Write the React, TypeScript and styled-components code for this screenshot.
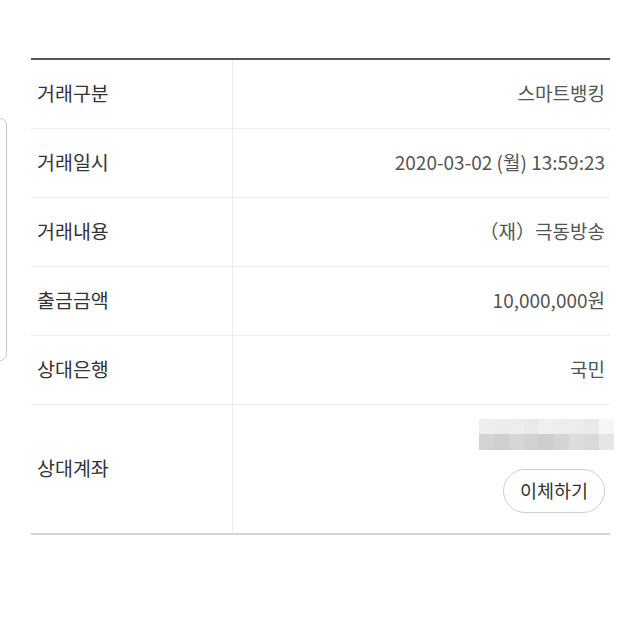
import styled, { createGlobalStyle } from 'styled-components';

const GlobalStyle = createGlobalStyle`
body{
    margin: 0;
    background: #fff;
    font-family: "Noto Sans CJK KR", "Noto Sans", sans-serif;
}
`;

const Page = styled.div`
padding: 58px 30px 0 31px;
`;

const DrawerEdge = styled.div`
position: fixed;
left: -20px;
top: 118px;
width: 25px;
height: 241px;
border: 1px solid #c8c8c8;
border-radius: 7px;
`;

const Table = styled.div`
width: 579px;
border-top: 2px solid #555;
border-bottom: 2px solid #d4d4d4;
`;

const Row = styled.div<{ tall?: boolean; last?: boolean }>`
display: grid;
grid-template-columns: 202px 1fr;
height: ${p => (p.tall ? 128 : 68)}px;
border-bottom: ${p => (p.last ? 'none' : '1px solid #ececec')};
`;

const Label = styled.div`
display: flex;
align-items: center;
padding: 0 0 3px 6px;
border-right: 1px solid #ececec;
font-size: 19.5px;
color: #333;
`;

const Value = styled.div`
display: flex;
align-items: center;
justify-content: flex-end;
padding: 0 5px 3px 0;
font-size: 19px;
color: #555;
`;

const AccountCell = styled.div`
display: flex;
flex-direction: column;
align-items: flex-end;
padding: 14px 5px 0 0;
`;

const Mosaic = styled.div`
display: grid;
grid-template-columns: repeat(9, 15px);
grid-template-rows: 15px 16px;
margin-right: -9px;
`;

const Pixel = styled.div<{ shade: string }>`
background: ${p => p.shade};
`;

const TransferButton = styled.button`
margin-top: 19px;
height: 44px;
padding: 0 16px 2px;
border: 1px solid #cfcfcf;
border-radius: 22px;
background: #fff;
font-family: inherit;
font-size: 18.5px;
color: #333;
`;

const topShades = ['#eeeeee', '#ececec', '#ededed', '#eaeaea', '#efefef', '#ededed', '#ececec', '#eaeaea', '#f6f6f6'];
const bottomShades = ['#d3d3d3', '#cfcfcf', '#d6d6d6', '#d1d1d1', '#cecece', '#d4d4d4', '#dcdcdc', '#d9d9d9', '#e6e6e6'];

const rows = [
    { label: '거래구분', value: '스마트뱅킹' },
    { label: '거래일시', value: '2020-03-02 (월) 13:59:23' },
    { label: '거래내용', value: '（재）극동방송' },
    { label: '출금금액', value: '10,000,000원' },
    { label: '상대은행', value: '국민' },
];

export default function App() {
    return (
        <Page>
            <GlobalStyle />
            <DrawerEdge />
            <Table>
                {rows.map(r => (
                    <Row key={r.label}>
                        <Label>{r.label}</Label>
                        <Value>{r.value}</Value>
                    </Row>
                ))}
                <Row tall last>
                    <Label>상대계좌</Label>
                    <AccountCell>
                        <Mosaic>
                            {topShades.map((s, i) => <Pixel key={'t' + i} shade={s} />)}
                            {bottomShades.map((s, i) => <Pixel key={'b' + i} shade={s} />)}
                        </Mosaic>
                        <TransferButton>이체하기</TransferButton>
                    </AccountCell>
                </Row>
            </Table>
        </Page>
    );
}
